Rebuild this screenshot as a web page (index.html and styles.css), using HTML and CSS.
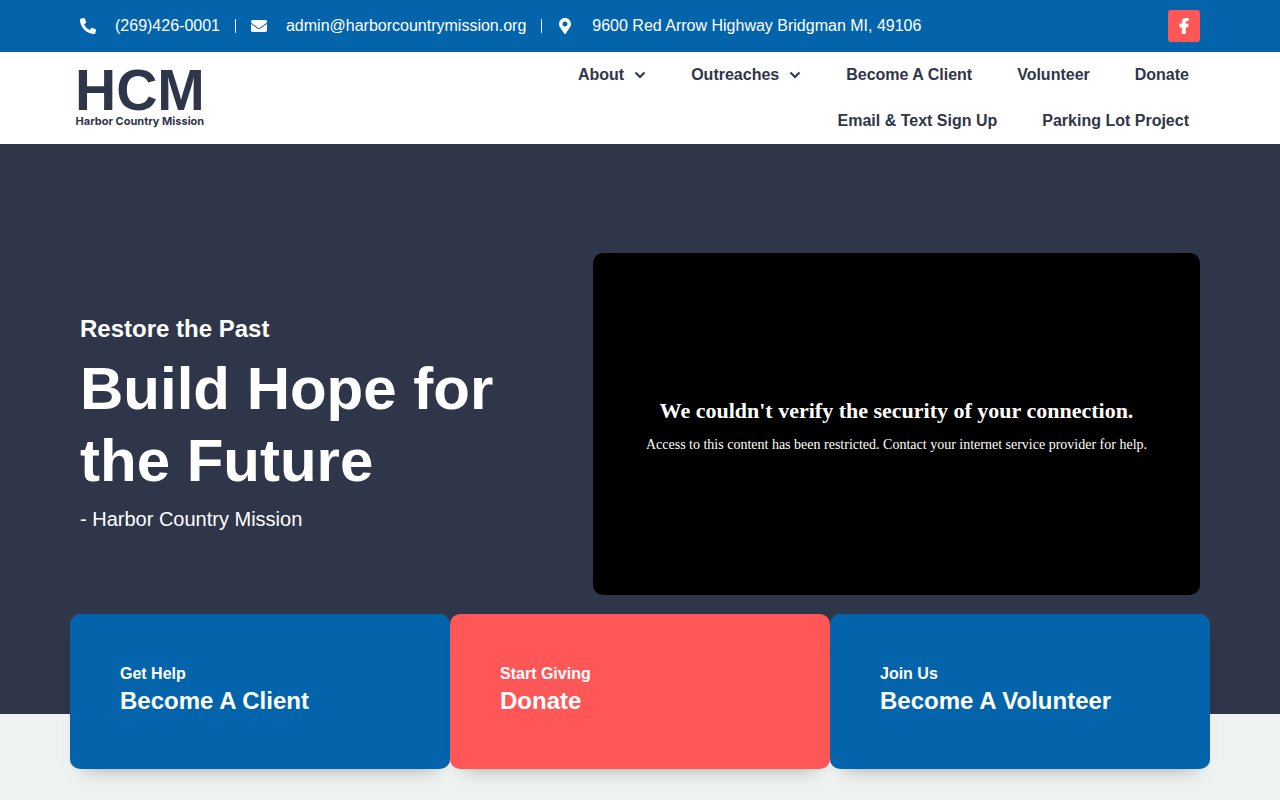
FILE: index.html
```html
<!DOCTYPE html>
<html lang="en">
<head>
    <meta charset="UTF-8">
    <meta name="viewport" content="width=device-width, initial-scale=1.0">
    <title>Harbor Country Mission</title>
    <link rel="stylesheet" href="styles.css">
</head>
<body>
    <div class="topbar">
        <div class="container topbar-inner">
            <ul class="contact-list">
                <li>
                    <a href="tel:2694260001">
                        <svg class="icon" viewBox="0 0 512 512" aria-hidden="true"><path d="M497.39 361.8l-112-48a24 24 0 0 0-28 6.9l-49.6 60.6A370.66 370.66 0 0 1 130.6 204.11l60.6-49.6a23.94 23.94 0 0 0 6.9-28l-48-112A24.16 24.16 0 0 0 122.6.61l-104 24A24 24 0 0 0 0 48c0 256.5 207.9 464 464 464a24 24 0 0 0 23.4-18.6l24-104a24.29 24.29 0 0 0-14.01-27.6z"/></svg>
                        <span>(269)426-0001</span>
                    </a>
                </li>
                <li>
                    <a href="mailto:admin@harborcountrymission.org">
                        <svg class="icon" viewBox="0 0 512 512" aria-hidden="true"><path d="M502.3 190.8c3.9-3.1 9.7-.2 9.7 4.7V400c0 26.5-21.5 48-48 48H48c-26.5 0-48-21.5-48-48V195.6c0-5 5.7-7.8 9.7-4.7 22.4 17.4 52.1 39.5 154.1 113.6 21.1 15.4 56.7 47.8 92.2 47.6 35.7.3 72-32.8 92.3-47.6 102-74.1 131.6-96.3 154-113.7zM256 320c23.2.4 56.6-29.2 73.4-41.4 132.7-96.3 142.8-104.7 173.4-128.7 5.8-4.5 9.2-11.5 9.2-18.9v-19c0-26.5-21.5-48-48-48H48c-26.5 0-48 21.5-48 48v19c0 7.4 3.4 14.3 9.2 18.9 30.6 23.9 40.7 32.4 173.4 128.7 16.8 12.2 50.2 41.8 73.4 41.4z"/></svg>
                        <span>admin@harborcountrymission.org</span>
                    </a>
                </li>
                <li>
                    <svg class="icon" viewBox="0 0 384 512" aria-hidden="true"><path d="M172.268 501.67C26.97 291.031 0 269.413 0 192 0 85.961 85.961 0 192 0s192 85.961 192 192c0 77.413-26.97 99.031-172.268 309.67-9.535 13.774-29.93 13.773-39.464 0zM192 272c44.183 0 80-35.817 80-80s-35.817-80-80-80-80 35.817-80 80 35.817 80 80 80z"/></svg>
                    <span>9600 Red Arrow Highway Bridgman MI, 49106</span>
                </li>
            </ul>
            <a class="social" href="#" aria-label="Facebook">
                <svg class="icon" viewBox="0 0 320 512" aria-hidden="true"><path stroke="currentColor" stroke-width="24" d="M279.14 288l14.22-92.66h-88.91v-60.13c0-25.35 12.42-50.06 52.24-50.06h40.42V6.26S260.43 0 225.36 0c-73.22 0-121.08 44.38-121.08 124.72v70.62H22.89V288h81.39v224h100.17V288z"/></svg>
            </a>
        </div>
    </div>

    <header class="header">
        <div class="container header-inner">
            <a class="logo" href="#">
                <span class="logo-mark">HCM</span>
                <span class="logo-name">Harbor Country Mission</span>
            </a>
            <nav class="nav">
                <a href="#">About
                    <svg class="chevron" viewBox="0 0 24 24" aria-hidden="true"><path d="M3 7l9 9 9-9"/></svg>
                </a>
                <a href="#">Outreaches
                    <svg class="chevron" viewBox="0 0 24 24" aria-hidden="true"><path d="M3 7l9 9 9-9"/></svg>
                </a>
                <a href="#">Become A Client</a>
                <a href="#">Volunteer</a>
                <a href="#">Donate</a>
                <a href="#">Email &amp; Text Sign Up</a>
                <a href="#">Parking Lot Project</a>
            </nav>
        </div>
    </header>

    <main>
        <section class="hero">
            <div class="container hero-inner">
                <div class="hero-text">
                    <h2>Restore the Past</h2>
                    <h1>Build Hope for the Future</h1>
                    <p>- Harbor Country Mission</p>
                </div>
                <div class="video">
                    <h3>We couldn't verify the security of your connection.</h3>
                    <p>Access to this content has been restricted. Contact your internet service provider for help.</p>
                </div>
            </div>
        </section>

        <section class="container cards">
            <a class="card" href="#">
                <span class="card-label">Get Help</span>
                <span class="card-title">Become A Client</span>
            </a>
            <a class="card card-donate" href="#">
                <span class="card-label">Start Giving</span>
                <span class="card-title">Donate</span>
            </a>
            <a class="card" href="#">
                <span class="card-label">Join Us</span>
                <span class="card-title">Become A Volunteer</span>
            </a>
        </section>
    </main>
</body>
</html>
```
FILE: styles.css
```css
* {
    box-sizing: border-box;
}
body {
    margin: 0;
    font-family: "Liberation Sans", Arial, sans-serif;
    font-size: 16px;
    color: #303649;
    background-color: #eef2f1;
}
h1, h2, h3, p, ul {
    margin: 0;
    padding: 0;
}
a {
    color: inherit;
    text-decoration: none;
}
.container {
    max-width: 1140px;
    margin: 0 auto;
}
.icon {
    width: 16px;
    height: 16px;
    fill: currentColor;
}

/* top bar */
.topbar {
    background-color: #0364ab;
    color: #fff;
}
.topbar-inner {
    display: flex;
    align-items: center;
    justify-content: space-between;
    padding: 10px;
}
.contact-list {
    display: flex;
    align-items: center;
    list-style: none;
}
.contact-list li, .contact-list a {
    display: flex;
    align-items: center;
    gap: 19px;
}
.contact-list li + li::before {
    content: "";
    width: 1px;
    height: 14px;
    margin: 0 -4px 0 15px;
    background-color: #fff;
}
.social {
    display: flex;
    align-items: center;
    justify-content: center;
    width: 32px;
    height: 32px;
    border-radius: 3px;
    background-color: #ff5757;
}

/* header */
.header {
    background-color: #fff;
}
.header-inner {
    display: grid;
    grid-template-columns: 1fr 2fr;
    align-items: center;
}
.logo {
    display: flex;
    flex-direction: column;
    justify-self: start;
    align-items: center;
    padding: 0 0 2px 5px;
    font-weight: bold;
}
.logo-mark {
    font-size: 57px;
    line-height: 48px;
}
.logo-name {
    font-family: Inter, sans-serif;
    font-size: 11px;
    line-height: 14px;
}
.nav {
    display: flex;
    flex-wrap: wrap;
    justify-content: flex-end;
    column-gap: 45px;
    padding-right: 21px;
    font-weight: bold;
    line-height: 46px;
}
.nav a {
    display: flex;
    align-items: center;
    gap: 10px;
}
.chevron {
    width: 12px;
    height: 12px;
    fill: none;
    stroke: currentColor;
    stroke-width: 4;
}

/* hero */
.hero {
    padding: 109px 0 119px;
    background-color: #303649;
    color: #fff;
}
.hero-inner {
    display: grid;
    grid-template-columns: 45fr 55fr;
    align-items: center;
}
.hero-text {
    padding: 0 10px;
}
.hero-text h2 {
    margin-bottom: 9px;
    font-size: 24px;
    line-height: 30px;
}
.hero-text h1 {
    margin-bottom: 7px;
    font-size: 60px;
    line-height: 72px;
}
.hero-text p {
    font-size: 20px;
    line-height: 30px;
}
.video {
    display: flex;
    flex-direction: column;
    align-items: center;
    justify-content: center;
    gap: 10px;
    min-height: 342px;
    margin: 0 10px;
    padding-top: 3px;
    border-radius: 10px;
    background-color: #000;
    font-family: "Liberation Serif", "Times New Roman", serif;
    text-align: center;
}
.video h3 {
    font-size: 22px;
    line-height: 28px;
}
.video p {
    font-size: 14px;
    line-height: 20px;
}

/* cards */
.cards {
    display: grid;
    grid-template-columns: repeat(3, 1fr);
    margin-top: -100px;
    margin-bottom: 31px;
}
.card {
    display: flex;
    flex-direction: column;
    padding: 50px 50px 52px;
    border-radius: 10px;
    background-color: #0364ab;
    color: #fff;
    font-weight: bold;
    box-shadow: 0 12px 18px -14px rgba(0, 0, 0, 0.4);
}
.card-donate {
    background-color: #ff5757;
}
.card-label {
    line-height: 20px;
}
.card-title {
    font-size: 24px;
    line-height: 33px;
}
```
